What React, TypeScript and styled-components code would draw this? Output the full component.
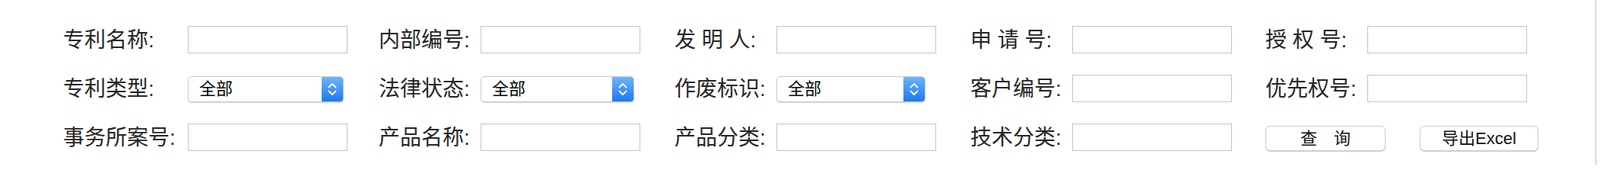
import React from "react";
import styled, { createGlobalStyle } from "styled-components";

const GlobalStyle = createGlobalStyle`
  html, body {
    margin: 0;
    padding: 0;
    background: #fff;
  }
  body {
    font-family: "Liberation Sans", "Noto Sans CJK SC", sans-serif;
  }
`;

const Page = styled.div`
  box-sizing: border-box;
  width: 2100px;
  height: 216px;
  padding: 33px 0 0 83px;
  border-right: 3px solid #e4e4e4;
`;

const Form = styled.div`
  display: grid;
  row-gap: 28px;
`;

const Row = styled.div`
  display: grid;
  grid-template-columns: 415px 389px 389px 388px auto;
  height: 36px;
`;

const Cell = styled.div`
  display: flex;
  align-items: center;
`;

const Label = styled.span<{ $w: number }>`
  width: ${(p) => p.$w}px;
  flex: none;
  font-size: 28px;
  line-height: 36px;
  color: #262626;
  white-space: pre;
  margin-top: 2px;
`;

const TextInput = styled.input`
  box-sizing: border-box;
  width: 210px;
  height: 36px;
  margin: 0;
  padding: 0 6px;
  border: 1px solid #c4c4c4;
  border-radius: 0;
  background: #fff;
  outline: none;
  font-size: 20px;
`;

const SelectBox = styled.div<{ $w: number }>`
  box-sizing: border-box;
  width: ${(p) => p.$w}px;
  height: 34px;
  margin-top: 2px;
  display: flex;
  align-items: stretch;
  border: 1px solid #cbcbcb;
  border-radius: 5px;
  box-shadow: 0 1px 1px rgba(0, 0, 0, 0.18);
  background: #fff;
  overflow: hidden;
`;

const SelectValue = styled.span`
  flex: 1;
  padding-left: 14px;
  font-size: 22px;
  line-height: 32px;
  color: #000;
`;

const SelectArrow = styled.span`
  width: 28px;
  flex: none;
  display: flex;
  align-items: center;
  justify-content: center;
  background: linear-gradient(#6db4fb, #1c78f4);
`;

const ButtonRow = styled.div`
  display: flex;
  gap: 45px;
  padding-top: 4px;
`;

const Button = styled.button<{ $w: number }>`
  box-sizing: border-box;
  width: ${(p) => p.$w}px;
  height: 33px;
  margin: 0;
  padding: 0;
  border: 1px solid #cfcfcf;
  border-radius: 6px;
  background: #fff;
  box-shadow: 0 1px 1px rgba(0, 0, 0, 0.2);
  font-family: "Liberation Sans", "Noto Sans CJK SC", sans-serif;
  font-size: 22px;
  line-height: 31px;
  color: #111;
  white-space: pre;
`;

function Chevrons() {
  return (
    <svg width="14" height="22" viewBox="0 0 14 22">
      <path
        d="M2.5 8.5 L7 4 L11.5 8.5 M2.5 13.5 L7 18 L11.5 13.5"
        fill="none"
        stroke="#fff"
        strokeWidth="1.8"
        strokeLinecap="round"
        strokeLinejoin="round"
      />
    </svg>
  );
}

function Select(props: { width: number; value: string }) {
  return (
    <SelectBox $w={props.width}>
      <SelectValue>{props.value}</SelectValue>
      <SelectArrow>
        <Chevrons />
      </SelectArrow>
    </SelectBox>
  );
}

interface FieldProps {
  label: string;
  labelWidth?: number;
  select?: number;
}

function Field({ label, labelWidth = 134, select }: FieldProps) {
  return (
    <Cell>
      <Label $w={labelWidth}>{label}</Label>
      {select ? <Select width={select} value="全部" /> : <TextInput />}
    </Cell>
  );
}

export default function App() {
  return (
    <>
      <GlobalStyle />
      <Page>
        <Form>
          <Row>
            <Field label="专利名称:" labelWidth={164} />
            <Field label="内部编号:" />
            <Field label="发 明 人:" />
            <Field label="申 请 号:" />
            <Field label="授 权 号:" />
          </Row>
          <Row>
            <Field label="专利类型:" labelWidth={164} select={205} />
            <Field label="法律状态:" select={202} />
            <Field label="作废标识:" select={196} />
            <Field label="客户编号:" />
            <Field label="优先权号:" />
          </Row>
          <Row>
            <Field label="事务所案号:" labelWidth={164} />
            <Field label="产品名称:" />
            <Field label="产品分类:" />
            <Field label="技术分类:" />
            <ButtonRow>
              <Button $w={158}>{"查\u3000询"}</Button>
              <Button $w={156}>导出Excel</Button>
            </ButtonRow>
          </Row>
        </Form>
      </Page>
    </>
  );
}
